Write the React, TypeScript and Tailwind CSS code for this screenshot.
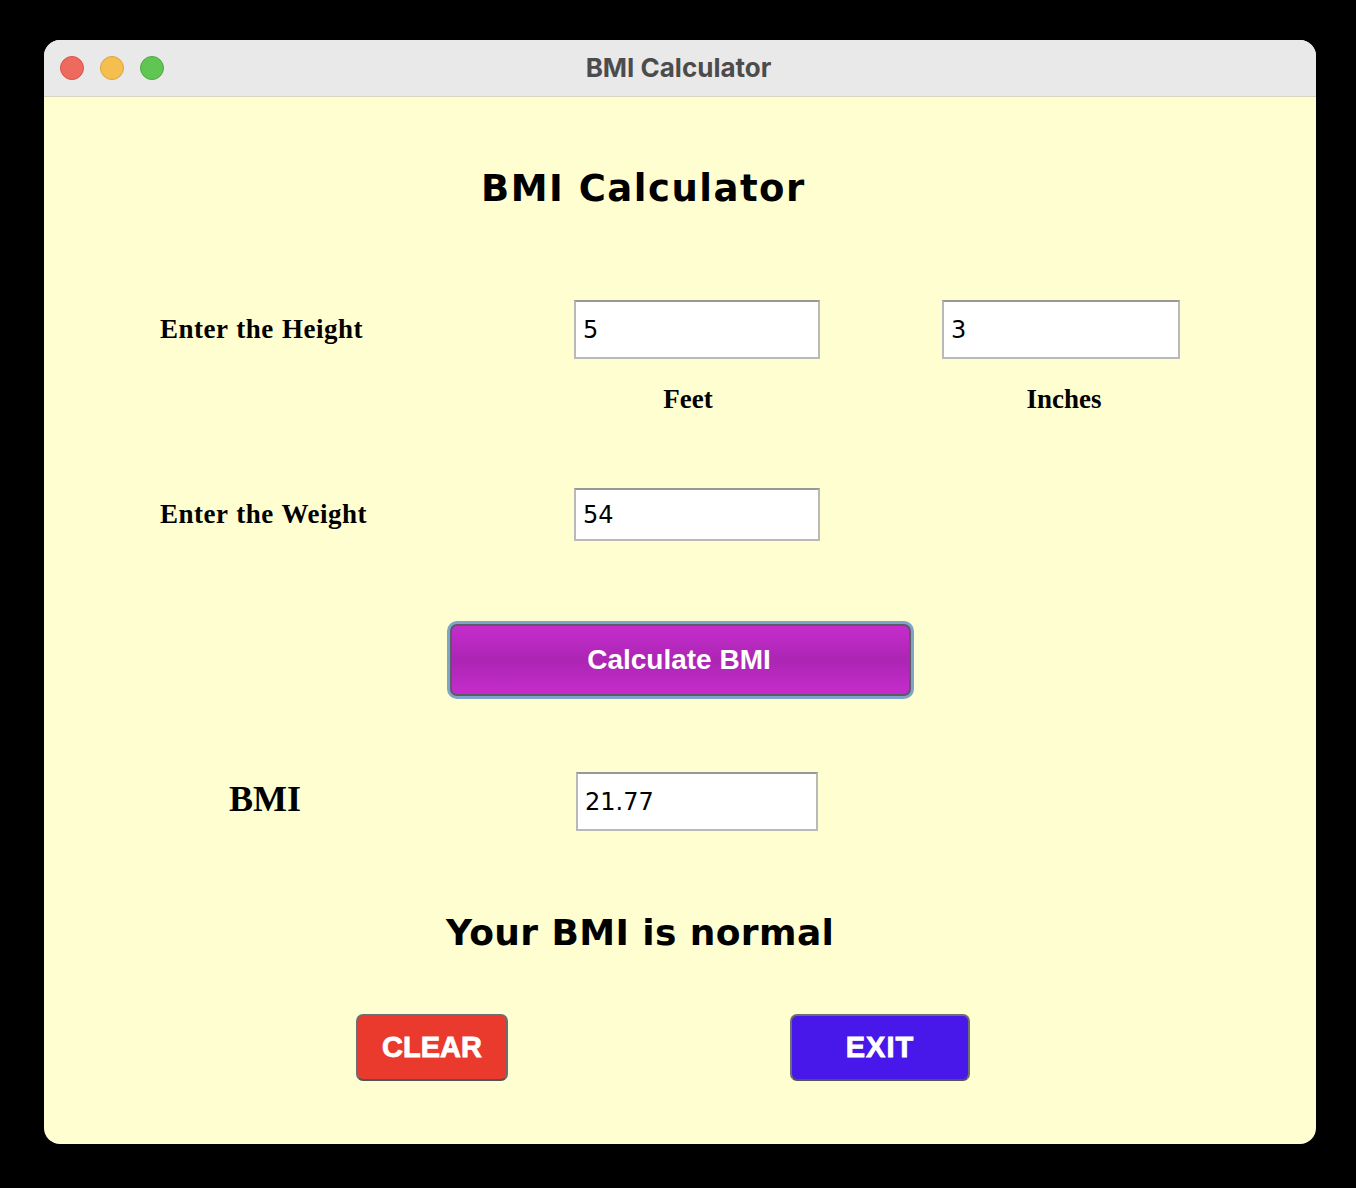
import React from "react";

const serif = { fontFamily: '"Liberation Serif", "Times New Roman", serif' };
const dejavu = { fontFamily: '"DejaVu Sans", Verdana, sans-serif' };
const arial = { fontFamily: '"Liberation Sans", Arial, sans-serif' };

function Field({ value, w }: { value: string; w: string }) {
  return (
    <div
      className={`${w} h-full flex items-center bg-white border-2 border-[#b9b9b9] border-t-[#989898] pl-[7px] text-[24px] text-black leading-none`}
      style={dejavu}
    >
      {value}
    </div>
  );
}

export default function App() {
  return (
    <div className="min-h-screen bg-black pt-[40px] pl-[44px]">
      <div className="w-[1272px] h-[1104px] rounded-[16px] overflow-hidden bg-[#fffed1] flex flex-col">
        {/* title bar */}
        <div className="h-[57px] shrink-0 bg-[#e9e9e9] border-b border-[#d7d6c0] flex items-center relative">
          <div className="flex items-center gap-[16px] pl-[16px]">
            <span className="w-[24px] h-[24px] rounded-full bg-[#ee6a5e] border border-[#d6544a]" />
            <span className="w-[24px] h-[24px] rounded-full bg-[#f5bf4f] border border-[#d9a33c]" />
            <span className="w-[24px] h-[24px] rounded-full bg-[#61c554] border border-[#4ea943]" />
          </div>
          <div
            className="absolute inset-0 flex items-center justify-center text-[26px] font-bold text-[#4c4c4c] pr-[3px] pb-[2px]"
            style={{ fontFamily: 'Inter, "Liberation Sans", sans-serif' }}
          >
            BMI Calculator
          </div>
        </div>

        {/* heading */}
        <div className="mt-[67px] h-[48px] flex items-center">
          <div className="ml-[437px] text-[37px] font-bold tracking-[1.5px] text-black leading-none" style={dejavu}>
            BMI Calculator
          </div>
        </div>

        {/* height row */}
        <div className="mt-[88px] h-[59px] flex items-center">
          <div className="ml-[116px] w-[414px] text-[27px] font-bold text-black tracking-[0.5px] [word-spacing:1px]" style={serif}>
            Enter the Height
          </div>
          <Field value="5" w="w-[246px]" />
          <div className="ml-[122px] h-full flex">
            <Field value="3" w="w-[238px]" />
          </div>
        </div>

        {/* units row */}
        <div className="mt-[25px] h-[30px] flex items-center text-[27px] font-bold text-black" style={serif}>
          <div className="ml-[544px] w-[200px] text-center">Feet</div>
          <div className="ml-[176px] w-[200px] text-center">Inches</div>
        </div>

        {/* weight row */}
        <div className="mt-[74px] h-[53px] flex items-center">
          <div className="ml-[116px] w-[414px] text-[27px] font-bold text-black tracking-[0.5px] [word-spacing:1px]" style={serif}>
            Enter the Weight
          </div>
          <Field value="54" w="w-[246px]" />
        </div>

        {/* calculate button */}
        <div className="mt-[80px] h-[78px] flex">
          <div className="ml-[403px] w-[467px] h-full rounded-[10px] bg-[#7fa4c9] p-[3px]">
            <div
              className="w-full h-full rounded-[7px] border-2 border-[#5d5a66] bg-gradient-to-b from-[#c52dcd] via-[#ac25b3] to-[#c52dcd] flex items-center justify-center text-white text-[28px] font-bold pr-[3px]"
              style={arial}
            >
              Calculate BMI
            </div>
          </div>
        </div>

        {/* BMI row */}
        <div className="mt-[73px] h-[59px] flex items-center">
          <div className="ml-[185px] w-[347px] text-[36px] font-bold text-black pb-[6px]" style={serif}>
            BMI
          </div>
          <Field value="21.77" w="w-[242px]" />
        </div>

        {/* result */}
        <div className="mt-[78px] h-[48px] flex items-center">
          <div className="ml-[402px] text-[36px] font-bold text-black leading-none tracking-[0.4px]" style={dejavu}>
            Your BMI is normal
          </div>
        </div>

        {/* bottom buttons */}
        <div className="mt-[57px] h-[67px] flex">
          <div
            className="ml-[312px] w-[152px] h-full rounded-[7px] border-2 border-[#6e6e6e] border-b-[#555] bg-[#ea3a2d] flex items-center justify-center text-white text-[29px] font-bold [-webkit-text-stroke:0.8px_white]"
            style={arial}
          >
            CLEAR
          </div>
          <div
            className="ml-[282px] w-[180px] h-full rounded-[7px] border-2 border-[#6e6e6e] border-b-[#555] bg-[#4718e9] flex items-center justify-center text-white text-[29px] font-bold tracking-[1px] [-webkit-text-stroke:0.8px_white]"
            style={arial}
          >
            EXIT
          </div>
        </div>
      </div>
    </div>
  );
}
